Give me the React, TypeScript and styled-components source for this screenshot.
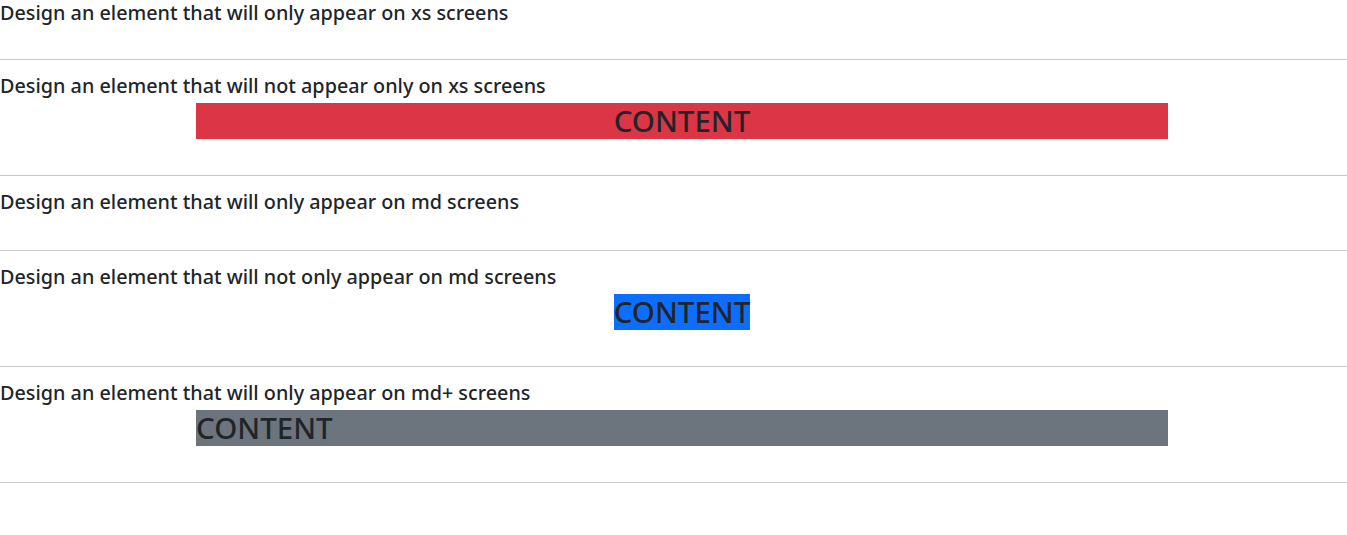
import styled, { createGlobalStyle } from 'styled-components';

const GlobalStyle = createGlobalStyle`
  body {
    margin: 0;
    background: #fff;
    color: #212529;
    font-family: "Noto Sans", "Open Sans", sans-serif;
  }
`;

type Variant = 'danger' | 'primary' | 'secondary';

const colors: Record<Variant, string> = {
  danger: '#dc3545',
  primary: '#0d6efd',
  secondary: '#6c757d',
};

const sections: {
  title: string;
  box?: { variant: Variant; align: 'center' | 'left'; fit: boolean };
}[] = [
  { title: 'Design an element that will only appear on xs screens' },
  {
    title: 'Design an element that will not appear only on xs screens',
    box: { variant: 'danger', align: 'center', fit: false },
  },
  { title: 'Design an element that will only appear on md screens' },
  {
    title: 'Design an element that will not only appear on md screens',
    box: { variant: 'primary', align: 'center', fit: true },
  },
  {
    title: 'Design an element that will only appear on md+ screens',
    box: { variant: 'secondary', align: 'left', fit: false },
  },
];

const App = () => {
  return (
    <>
      <GlobalStyle />
      <S.Page>
        {sections.map((s, i) => (
          <S.Section key={i} first={i === 0} hasBox={!!s.box}>
            <S.Title>{s.title}</S.Title>
            {s.box && (
              <S.Container align={s.box.align}>
                <S.Box variant={s.box.variant} fit={s.box.fit}>
                  CONTENT
                </S.Box>
              </S.Container>
            )}
          </S.Section>
        ))}
      </S.Page>
    </>
  );
};

const S = {
  Page: styled.div`
    display: flex;
    flex-direction: column;
  `,
  Section: styled.section<{ first: boolean; hasBox: boolean }>`
    display: flex;
    flex-direction: column;
    padding-top: ${({ first }) => (first ? '0' : '13px')};
    padding-bottom: ${({ first, hasBox }) =>
      first ? '35px' : hasBox ? '36px' : '37px'};
    border-bottom: 1px solid #c8c9ca;
  `,
  Title: styled.div`
    font-size: 19.8px;
    line-height: 25px;
    margin-bottom: -1px;
    font-weight: 500;
  `,
  Container: styled.div<{ align: 'center' | 'left' }>`
    display: flex;
    justify-content: ${({ align }) => (align === 'center' ? 'center' : 'flex-start')};
    width: 972px;
    margin: 6px 0 0 196px;
  `,
  Box: styled.div<{ variant: Variant; fit: boolean }>`
    background: ${({ variant }) => colors[variant]};
    flex: ${({ fit }) => (fit ? '0 0 auto' : '1 1 auto')};
    font-size: 29.5px;
    line-height: 36px;
    font-weight: 500;
    color: #212529;
    text-align: ${({ fit }) => (fit ? 'left' : 'inherit')};
  `,
};

export default App;
